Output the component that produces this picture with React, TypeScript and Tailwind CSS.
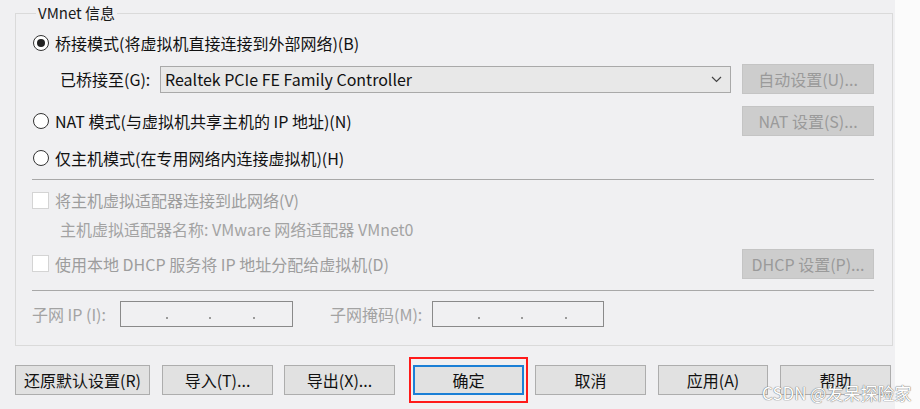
import { ReactNode } from "react";

const Radio = ({ checked }: { checked?: boolean }) => (
  <span className="ml-[1px] flex h-[16px] w-[16px] shrink-0 items-center justify-center rounded-full border border-[#333333] bg-white">
    {checked && <span className="h-[8px] w-[8px] rounded-full bg-[#222222]" />}
  </span>
);

const Check = () => (
  <span className="h-[17px] w-[17px] shrink-0 border border-[#d4d4d4] bg-white" />
);

const DisabledButton = ({ children }: { children: ReactNode }) => (
  <div className="ml-auto flex h-[30px] w-[132px] items-center justify-center border border-[#c4c4c4] bg-[#cdcdcd] text-[16px] text-[#9a9a9a]">
    {children}
  </div>
);

const IpBox = ({ width }: { width: string }) => (
  <div className={`flex h-[26px] items-end border border-[#8a8a8a] pb-[7px] pl-[45px] ${width}`}>
    <span className="h-[2px] w-[2px] bg-[#9a9a9a]" />
    <span className="ml-[41px] h-[2px] w-[2px] bg-[#9a9a9a]" />
    <span className="ml-[42px] h-[2px] w-[2px] bg-[#9a9a9a]" />
  </div>
);

const Button = ({ children, width = "w-[111px]", className = "" }: { children: ReactNode; width?: string; className?: string }) => (
  <div className={`flex h-[30px] items-center justify-center border border-[#adadad] bg-[#e1e1e1] text-[16px] text-[#111111] ${width} ${className}`}>
    {children}
  </div>
);

export default function App() {
  return (
    <div className="relative flex h-[409px] w-[920px] overflow-hidden font-['Noto_Sans_CJK_SC',sans-serif] leading-[20px]">
      <div className="w-[895px] bg-[#f0f0f2] pl-[15px] pt-[3px]">
        <fieldset className="w-[878px] border border-[#dadada] pb-[18px] pl-[16px] pr-[18px]">
          <legend className="ml-[4px] px-[2px] text-[15px] leading-[20px] text-[#1a1a1a]">VMnet 信息</legend>

          <div className="mt-[6px] flex h-[28px] items-center text-[16px] text-[#111111]">
            <Radio checked />
            <span className="ml-[6px]">桥接模式(将虚拟机直接连接到外部网络)(B)</span>
          </div>

          <div className="mt-[7px] flex h-[30px] items-center text-[16px] text-[#111111]">
            <span className="w-[128px] pl-[28px]">已桥接至(G):</span>
            <div className="flex h-[27px] w-[571px] items-center justify-between border border-[#a9a9a9] bg-[#e8e8e8] pl-[4px] pr-[8px]">
              <span>Realtek PCIe FE Family Controller</span>
              <svg width="11" height="7" viewBox="0 0 11 7" fill="none">
                <polyline points="1,1 5.5,5.5 10,1" stroke="#444444" strokeWidth="1.2" />
              </svg>
            </div>
            <DisabledButton>自动设置(U)...</DisabledButton>
          </div>

          <div className="mt-[12px] flex h-[30px] items-center text-[16px] text-[#111111]">
            <Radio />
            <span className="ml-[6px]">NAT 模式(与虚拟机共享主机的 IP 地址)(N)</span>
            <DisabledButton>NAT 设置(S)...</DisabledButton>
          </div>

          <div className="mt-[8px] flex h-[28px] items-center text-[16px] text-[#111111]">
            <Radio />
            <span className="ml-[6px]">仅主机模式(在专用网络内连接虚拟机)(H)</span>
          </div>

          <div className="mt-[7px] h-px bg-[#a8a8a8]" />

          <div className="mt-[6px] flex h-[28px] items-center text-[16px] text-[#9d9d9d]">
            <Check />
            <span className="ml-[6px]">将主机虚拟适配器连接到此网络(V)</span>
          </div>

          <div className="mt-[4px] flex h-[22px] items-center pl-[28px] text-[16px] text-[#a3a3a3]">
            主机虚拟适配器名称: VMware 网络适配器 VMnet0
          </div>

          <div className="mt-[8px] flex h-[31px] items-center text-[16px] text-[#9d9d9d]">
            <Check />
            <span className="ml-[6px]">使用本地 DHCP 服务将 IP 地址分配给虚拟机(D)</span>
            <DisabledButton>DHCP 设置(P)...</DisabledButton>
          </div>

          <div className="mt-[11px] h-px bg-[#a8a8a8]" />

          <div className="mt-[10px] flex h-[26px] items-center text-[16px] text-[#a3a3a3]">
            <span className="w-[88px]">子网 IP (I):</span>
            <IpBox width="w-[173px]" />
            <span className="ml-[37px] w-[102px]">子网掩码(M):</span>
            <IpBox width="w-[172px]" />
          </div>
        </fieldset>

        <div className="mt-[11px] flex h-[46px] items-center">
          <Button width="w-[135px]">还原默认设置(R)</Button>
          <Button className="ml-[12px]">导入(T)...</Button>
          <Button className="ml-[11px]">导出(X)...</Button>
          <div className="ml-[14px] flex h-[46px] w-[119px] items-center justify-center border-2 border-[#ff1a1a]">
            <div className="flex h-[30px] w-[111px] items-center justify-center border-2 border-[#1b7fd6] bg-[#e1e1e1] text-[16px] text-[#111111]">
              确定
            </div>
          </div>
          <Button className="ml-[7px]">取消</Button>
          <Button width="w-[110px]" className="ml-[12px]">应用(A)</Button>
          <Button className="ml-[12px]">帮助</Button>
        </div>
      </div>
      <div className="flex-1 bg-[#fbfbfb]" />

      <span className="absolute left-[762px] top-[381px] whitespace-nowrap text-[17px] leading-[24px] text-white [text-shadow:0_0_1px_#6b6b6b,0_0_1px_#6b6b6b]">
        CSDN @发呆探险家
      </span>
    </div>
  );
}
